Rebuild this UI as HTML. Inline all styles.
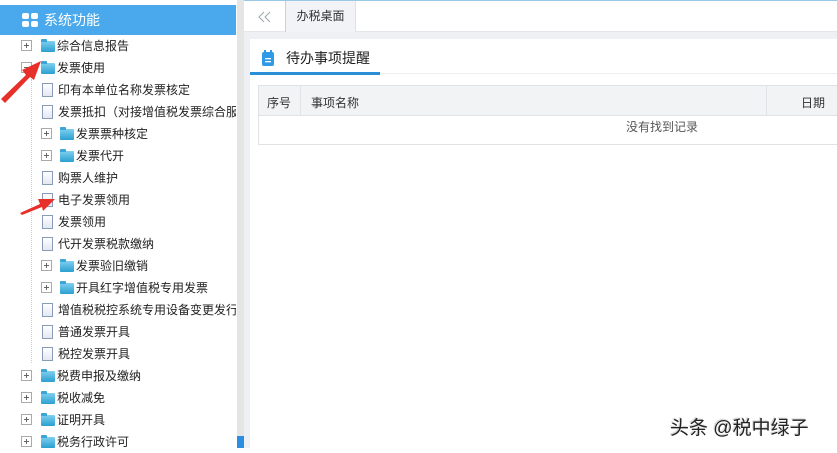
<!DOCTYPE html>
<html><head><meta charset="utf-8"><style>
*{margin:0;padding:0;box-sizing:border-box}
body{width:837px;height:448px;overflow:hidden;background:#fff;font-family:"Liberation Sans","Noto Sans CJK SC",sans-serif;font-size:12px;color:#333;position:relative}
.a{position:absolute}
.hdr{left:0;top:5px;width:236px;height:30px;background:#4aa8ec;color:#fff;font-size:14px;line-height:30px;padding-left:44px}
.row{position:absolute;height:22px;line-height:22px;font-size:12px;color:#222;white-space:nowrap}
.pm{position:absolute;width:11px;height:11px;border:1px solid #aaa;background:#fff;top:5px}
.pm:before{content:"";position:absolute;left:2px;top:4px;width:5px;height:1px;background:#666}
.pm.p:after{content:"";position:absolute;left:4px;top:2px;width:1px;height:5px;background:#666}
.fd{position:absolute;width:14px;height:11px;top:6px;background:linear-gradient(#7fd0ef,#2a9fd0);border-radius:1px}
.fd:before{content:"";position:absolute;left:0;top:-2px;width:6px;height:3px;background:#3aa5d6;border-radius:1px 1px 0 0}
.fl{position:absolute;width:11px;height:14px;top:4px;border:1px solid #8a9ab8;background:linear-gradient(#fff,#e2e8f2)}
.sb{left:237px;top:0;width:7px;height:448px;background:#e5e5e5}
</style></head><body>
<div class="a" style="left:0;top:0;width:237px;height:5px;background:#fff"></div>
<div class="a hdr">系统功能</div>
<svg class="a" style="left:22px;top:13px" width="16" height="14"><rect x="0" y="0" width="7" height="6" rx="2" fill="#fff"/><rect x="9" y="0" width="7" height="6" rx="2" fill="#fff"/><rect x="0" y="8" width="7" height="6" rx="2" fill="#fff"/><rect x="9" y="8" width="7" height="6" rx="2" fill="#fff"/></svg>
<div class="a" style="left:31px;top:79px;width:0;height:284px;border-left:1px dotted #ccc"></div>

<div class="row" style="top:35px;left:0"><span class="pm p" style="left:21px"></span><span class="fd" style="left:41px"></span><span style="position:absolute;left:57px">综合信息报告</span></div>
<div class="row" style="top:57px;left:0"><span class="pm" style="left:21px"></span><span class="fd" style="left:41px"></span><span style="position:absolute;left:57px">发票使用</span></div>
<div class="row" style="top:79px"><span class="fl" style="left:42px"></span><span style="position:absolute;left:58px">印有本单位名称发票核定</span></div>
<div class="row" style="top:101px;width:236px;overflow:hidden"><span class="fl" style="left:42px"></span><span style="position:absolute;left:58px">发票抵扣（对接增值税发票综合服务平台）</span></div>
<div class="row" style="top:123px"><span class="pm p" style="left:41px"></span><span class="fd" style="left:60px"></span><span style="position:absolute;left:76px">发票票种核定</span></div>
<div class="row" style="top:145px"><span class="pm p" style="left:41px"></span><span class="fd" style="left:60px"></span><span style="position:absolute;left:76px">发票代开</span></div>
<div class="row" style="top:167px"><span class="fl" style="left:42px"></span><span style="position:absolute;left:58px">购票人维护</span></div>
<div class="row" style="top:189px"><span class="fl" style="left:42px"></span><span style="position:absolute;left:58px">电子发票领用</span></div>
<div class="row" style="top:211px"><span class="fl" style="left:42px"></span><span style="position:absolute;left:58px">发票领用</span></div>
<div class="row" style="top:233px"><span class="fl" style="left:42px"></span><span style="position:absolute;left:58px">代开发票税款缴纳</span></div>
<div class="row" style="top:255px"><span class="pm p" style="left:41px"></span><span class="fd" style="left:60px"></span><span style="position:absolute;left:76px">发票验旧缴销</span></div>
<div class="row" style="top:277px"><span class="pm p" style="left:41px"></span><span class="fd" style="left:60px"></span><span style="position:absolute;left:76px">开具红字增值税专用发票</span></div>
<div class="row" style="top:299px;width:236px;overflow:hidden"><span class="fl" style="left:42px"></span><span style="position:absolute;left:58px">增值税税控系统专用设备变更发行</span></div>
<div class="row" style="top:321px"><span class="fl" style="left:42px"></span><span style="position:absolute;left:58px">普通发票开具</span></div>
<div class="row" style="top:343px"><span class="fl" style="left:42px"></span><span style="position:absolute;left:58px">税控发票开具</span></div>
<div class="row" style="top:365px"><span class="pm p" style="left:21px"></span><span class="fd" style="left:41px"></span><span style="position:absolute;left:57px">税费申报及缴纳</span></div>
<div class="row" style="top:387px"><span class="pm p" style="left:21px"></span><span class="fd" style="left:41px"></span><span style="position:absolute;left:57px">税收减免</span></div>
<div class="row" style="top:409px"><span class="pm p" style="left:21px"></span><span class="fd" style="left:41px"></span><span style="position:absolute;left:57px">证明开具</span></div>
<div class="row" style="top:431px"><span class="pm p" style="left:21px"></span><span class="fd" style="left:41px"></span><span style="position:absolute;left:57px">税务行政许可</span></div>

<div class="a sb"></div>
<div class="a" style="left:237px;top:436px;width:7px;height:12px;background:#2b8ee0"></div>

<div class="a" style="left:244px;top:0;width:593px;height:1px;background:#9cc8e8"></div>
<div class="a" style="left:244px;top:1px;width:593px;height:31px;background:#fff;border-bottom:1px solid #e3e6ea"></div>
<svg class="a" style="left:258px;top:11px" width="14" height="12"><path d="M6,1 L1,6 L6,11 M12,1 L7,6 L12,11" fill="none" stroke="#9aa" stroke-width="1"/></svg>
<div class="a" style="left:285px;top:1px;width:1px;height:31px;background:#b9d6ee"></div>
<div class="a" style="left:286px;top:1px;width:70px;height:31px;background:#f1f3f6;border-right:1px solid #dde1e6;line-height:31px;text-align:center;color:#333">办税桌面</div>
<div class="a" style="left:244px;top:32px;width:593px;height:416px;background:#eef0f3"></div>
<div class="a" style="left:250px;top:39px;width:587px;height:409px;background:#fff"></div>
<svg class="a" style="left:262px;top:50px" width="12" height="16"><rect x="0" y="2" width="12" height="14" rx="2" fill="#2f9ae6"/><rect x="2" y="0" width="2" height="4" fill="#2f9ae6"/><rect x="8" y="0" width="2" height="4" fill="#2f9ae6"/><rect x="3" y="8" width="6" height="1.3" fill="#fff"/><rect x="3" y="11" width="6" height="1.3" fill="#fff"/></svg>
<div class="a" style="left:286px;top:48px;font-size:14px;color:#222">待办事项提醒</div>
<div class="a" style="left:250px;top:73px;width:587px;height:1px;background:#eceef1"></div>
<div class="a" style="left:250px;top:72px;width:130px;height:3px;background:#2a8fd6"></div>
<div class="a" style="left:258px;top:85px;width:579px;height:60px;border:1px solid #e0e3e6;border-right:none"></div>
<div class="a" style="left:259px;top:86px;width:578px;height:30px;background:#f1f3f5;border-bottom:1px solid #e0e3e6"></div>
<div class="a" style="left:300px;top:86px;width:1px;height:30px;background:#e0e3e6"></div>
<div class="a" style="left:766px;top:86px;width:1px;height:30px;background:#e0e3e6"></div>
<div class="a" style="left:267px;top:94px;color:#333">序号</div>
<div class="a" style="left:311px;top:94px;color:#333">事项名称</div>
<div class="a" style="left:801px;top:94px;color:#333">日期</div>
<div class="a" style="left:626px;top:118px;color:#555">没有找到记录</div>

<div class="a" style="left:670px;top:413px;font-size:19px;color:#222;text-shadow:1px 1px 1px #fff,-1px -1px 1px #ccc">头条 @税中绿子</div>

<svg class="a" style="left:0;top:0" width="70" height="220">
<path d="M1,99 L26,75 L22,70 L41,61 L34,80 L30,77 L5,103 Z" fill="#e8302a"/>
<path d="M20,213 L40,204 L38,199 L55,199 L43,211 L42,207 L22,215 Z" fill="#e8302a"/>
</svg>
</body></html>
